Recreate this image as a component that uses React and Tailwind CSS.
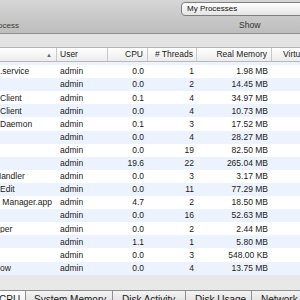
import { useState } from 'react';

const ROWS = [
    { name: '',            user: 'admin', cpu: '0.0',  th: '2',  mem: '3.41 MB' },
    { name: '.service',    user: 'admin', cpu: '0.0',  th: '1',  mem: '1.98 MB' },
    { name: '',            user: 'admin', cpu: '0.0',  th: '2',  mem: '14.45 MB' },
    { name: 'Client',      user: 'admin', cpu: '0.1',  th: '4',  mem: '34.97 MB' },
    { name: 'Client',      user: 'admin', cpu: '0.0',  th: '4',  mem: '10.73 MB' },
    { name: 'Daemon',      user: 'admin', cpu: '0.1',  th: '3',  mem: '17.52 MB' },
    { name: '',            user: 'admin', cpu: '0.0',  th: '4',  mem: '28.27 MB' },
    { name: '',            user: 'admin', cpu: '0.0',  th: '19', mem: '82.50 MB' },
    { name: '',            user: 'admin', cpu: '19.6', th: '22', mem: '265.04 MB' },
    { name: 'Handler',     user: 'admin', cpu: '0.0',  th: '3',  mem: '3.17 MB', shift: true },
    { name: 'Edit',        user: 'admin', cpu: '0.0',  th: '11', mem: '77.29 MB' },
    { name: ' Manager.app', user: 'admin', cpu: '4.7', th: '2',  mem: '18.50 MB' },
    { name: '',            user: 'admin', cpu: '0.0',  th: '16', mem: '52.63 MB' },
    { name: 'per',         user: 'admin', cpu: '0.0',  th: '2',  mem: '2.44 MB' },
    { name: '',            user: 'admin', cpu: '1.1',  th: '1',  mem: '5.80 MB' },
    { name: '',            user: 'admin', cpu: '0.0',  th: '3',  mem: '548.00 KB' },
    { name: 'ow',          user: 'admin', cpu: '0.0',  th: '4',  mem: '13.75 MB' },
];

const TABS = [
    { label: 'CPU',           w: 'w-[37px]', pl: 'pl-[9px]' },
    { label: 'System Memory', w: 'w-[88px]', pl: 'pl-[8px]' },
    { label: 'Disk Activity', w: 'w-[74px]', pl: 'pl-[9px]' },
    { label: 'Disk Usage',    w: 'w-[67px]', pl: 'pl-[9px]' },
    { label: 'Network',       w: 'w-[60px]', pl: 'pl-[9px]' },
];

export default function App() {
    const [tab, setTab] = useState('CPU');

    return (
        <div className="w-[300px] h-[300px] overflow-hidden flex flex-col bg-[#e8e8e8] text-[#1a1a1a]"
             style={{ fontFamily: '"Liberation Sans", Arial, sans-serif' }}>

            {/* ── Toolbar ─────────────────────────────────────────── */}
            <div className="h-[34px] flex-shrink-0 flex bg-gradient-to-b from-[#d6d6d6] to-[#bdbdbd] border-b border-[#8e8e8e] overflow-hidden">
                <div className="w-[181px] flex-shrink-0 flex flex-col justify-end pb-[3px]">
                    <span className="text-[8px] text-[#3a3a3a] -ml-[10px] leading-none">Process</span>
                </div>
                <div className="w-[140px] flex-shrink-0 flex flex-col pt-[2px]">
                    <div className="h-[14px] rounded-l-[4px] border border-[#7f7f7f] bg-gradient-to-b from-[#ffffff] to-[#e4e4e4] flex items-center pl-[5px] text-[8px] text-[#111]">
                        My Processes
                    </div>
                    <div className="flex-1 flex items-end pb-[3px] pl-[58px]">
                        <span className="text-[8.6px] text-[#333] leading-none">Show</span>
                    </div>
                </div>
            </div>

            {/* ── Band ────────────────────────────────────────────── */}
            <div className="h-[14px] flex-shrink-0 bg-[#e3e3e3] border-b border-[#b4b4b4]" />

            {/* ── Column header ───────────────────────────────────── */}
            <div className="h-[14px] flex-shrink-0 flex items-center bg-gradient-to-b from-[#ffffff] to-[#ececec] border-b border-[#b9b9b9] text-[8.5px] leading-none">
                <div className="w-[57px] h-full flex items-center justify-end pr-[4px] border-r border-[#c8c8c8]">
                    <span className="text-[6px] text-[#6a6a6a]">▲</span>
                </div>
                <div className="w-[51px] h-full flex items-center pl-[3px] border-r border-[#c8c8c8]">User</div>
                <div className="w-[40px] h-full flex items-center justify-end pr-[4px] border-r border-[#c8c8c8]">CPU</div>
                <div className="w-[49px] h-full flex items-center justify-end pr-[3px] border-r border-[#c8c8c8]"># Threads</div>
                <div className="w-[75px] h-full flex items-center justify-end pr-[4px] border-r border-[#c8c8c8]">Real Memory</div>
                <div className="flex-1 h-full flex items-center pl-[11px] whitespace-nowrap overflow-hidden">Virtual Memory</div>
            </div>

            {/* ── Rows ────────────────────────────────────────────── */}
            <div className="h-[213px] flex-shrink-0 overflow-hidden bg-white">
                <div className="-mt-[10px]">
                    {ROWS.map((r, i) => (
                        <div key={i}
                             className={`h-[13.1px] flex items-center text-[8.5px] leading-none whitespace-nowrap ${i % 2 === 0 ? 'bg-[#edf3fe]' : 'bg-white'}`}>
                            <div className="w-[57px] overflow-hidden">
                                <span className={`block whitespace-pre ${r.shift ? '-ml-[5px]' : ''}`}>{r.name}</span>
                            </div>
                            <div className="w-[51px] pl-[3px]">{r.user}</div>
                            <div className="w-[40px] text-right pr-[4px]">{r.cpu}</div>
                            <div className="w-[49px] text-right pr-[3px]">{r.th}</div>
                            <div className="w-[75px] text-right pr-[4px]">{r.mem}</div>
                            <div className="flex-1" />
                        </div>
                    ))}
                </div>
            </div>

            {/* ── Gap + tabs ──────────────────────────────────────── */}
            <div className="flex-1 flex flex-col justify-end">
                <div className="h-[10px] flex overflow-hidden -ml-[10px]">
                    {TABS.map(t => (
                        <button key={t.label}
                                onClick={() => setTab(t.label)}
                                className={`${t.w} ${t.pl} flex-shrink-0 h-[16px] text-left text-[10px] leading-none pt-[3px] border border-[#8f8f8f] -ml-px
                                    ${tab === t.label
                                        ? 'bg-gradient-to-b from-[#ffffff] to-[#ececec]'
                                        : 'bg-gradient-to-b from-[#f4f4f4] to-[#dcdcdc]'}`}>
                            {t.label}
                        </button>
                    ))}
                </div>
            </div>
        </div>
    );
}
